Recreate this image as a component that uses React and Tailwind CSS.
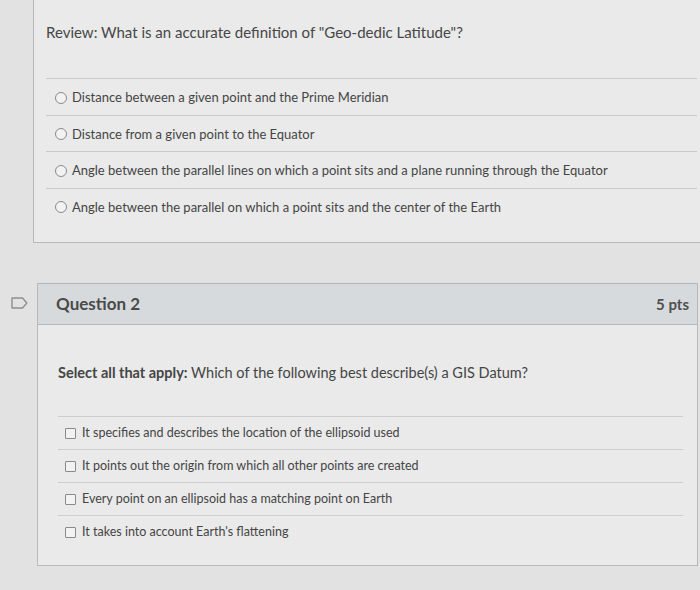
import React from 'react'

const firstAnswers = [
    'Distance between a given point and the Prime Meridian',
    'Distance from a given point to the Equator',
    'Angle between the parallel lines on which a point sits and a plane running through the Equator',
    'Angle between the parallel on which a point sits and the center of the Earth',
]

const secondAnswers = [
    'It specifies and describes the location of the ellipsoid used',
    'It points out the origin from which all other points are created',
    'Every point on an ellipsoid has a matching point on Earth',
    "It takes into account Earth's flattening",
]

const Radio = () => (
    <span className="w-[12px] h-[12px] rounded-full border border-[#8a8a8a] bg-[#f2f2f2] shrink-0" />
)

const Checkbox = () => (
    <span className="w-[11px] h-[11px] rounded-[1px] border border-[#8a8a8a] bg-[#f2f2f2] shrink-0" />
)

const FlagIcon = () => (
    <svg width="17" height="12" viewBox="0 0 17 12" fill="none">
        <path d="M1 1 H11.5 L15.8 6 L11.5 11 H1 Z" stroke="#8f8f8f" strokeWidth="1.4" strokeLinejoin="round" />
    </svg>
)

const App = () => {
    return (
        <div className="w-[700px] h-[590px] overflow-hidden bg-[#e1e2e1] text-[#454545] font-['Lato','Noto_Sans',sans-serif]">
            {/* previous question */}
            <div className="ml-[33px] h-[243px] bg-[#e9eae9] border-l border-b border-[#b9b9b9] pl-[12px] pr-[3px]">
                <div className="pt-[22px] h-[78px] text-[15px] leading-[20px] text-[#474747]">
                    Review: What is an accurate definition of "Geo-dedic Latitude"?
                </div>
                <div className="flex flex-col">
                    {firstAnswers.map((a) => (
                        <div key={a} className="h-[36.5px] pt-[2px] border-t border-[#cacaca] flex items-center gap-[5px] pl-[9px] text-[13px]">
                            <Radio />
                            <span>{a}</span>
                        </div>
                    ))}
                </div>
            </div>

            {/* question 2 */}
            <div className="flex mt-[40px]">
                <div className="w-[37px] shrink-0 flex justify-center pt-[14px] pl-[2px]">
                    <FlagIcon />
                </div>
                <div className="flex-1 mr-[2px] h-[283px] border-l border-r border-b border-[#b9b9b9] bg-[#e9eae9]">
                    <div className="h-[42px] bg-[#d7dadc] border-t border-b border-[#b4b6b8] flex items-center justify-between pl-[18px] pr-[8px]">
                        <span className="text-[17px] font-bold text-[#4a4a4a]">Question 2</span>
                        <span className="text-[15px] font-bold text-[#4f4f4f]">5 pts</span>
                    </div>
                    <div className="pl-[20px] pr-[14px]">
                        <div className="pt-[39px] h-[91px] text-[14.5px] leading-[18px]">
                            <span className="font-bold">Select all that apply:</span> Which of the following best describe(s) a GIS Datum?
                        </div>
                        <div className="flex flex-col">
                            {secondAnswers.map((a) => (
                                <div key={a} className="h-[33px] border-t border-[#cdcdcd] flex items-center gap-[6px] pl-[7px] text-[12.5px]">
                                    <Checkbox />
                                    <span>{a}</span>
                                </div>
                            ))}
                        </div>
                    </div>
                </div>
            </div>
        </div>
    )
}

export default App
